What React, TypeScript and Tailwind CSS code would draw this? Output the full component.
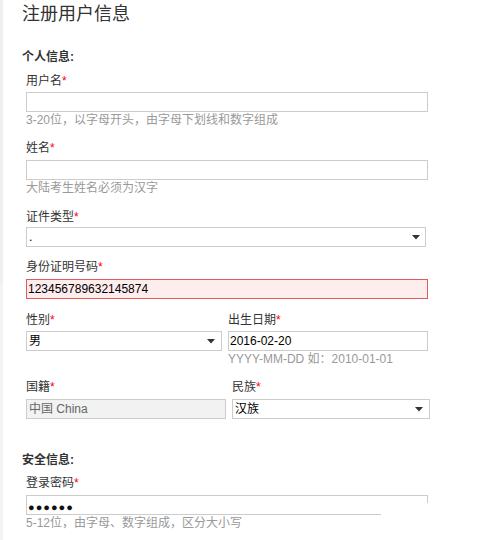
import type { ReactNode } from 'react'

function Req() {
  return <span className="text-[#ff0000]">*</span>
}

function Label({ children, className = '' }: { children: ReactNode; className?: string }) {
  return (
    <div className={`h-[16px] text-[12px] leading-[16px] text-[#333] ${className}`}>
      {children}
      <Req />
    </div>
  )
}

function Help({ children }: { children: ReactNode }) {
  return <div className="h-[16px] text-[12px] leading-[16px] text-[#999]">{children}</div>
}

function Arrow() {
  return (
    <svg width="8" height="5" viewBox="0 0 8 5" className="shrink-0">
      <polygon points="0,0 8,0 4,4.5" fill="#333" />
    </svg>
  )
}

function Select({ value, className = '', pr = 'pr-[6px]' }: { value: string; className?: string; pr?: string }) {
  return (
    <div
      className={`flex h-[20px] items-center justify-between border border-[#ccc] bg-white pl-[2px] ${pr} text-[12px] leading-[18px] text-black ${className}`}
    >
      <span>{value}</span>
      <Arrow />
    </div>
  )
}

export default function App() {
  return (
    <div className="flex h-[540px] w-[498px] overflow-hidden bg-white font-['Liberation_Sans','Noto_Sans_CJK_SC',sans-serif]">
      {/* left frame strip */}
      <div className="flex w-[3px] shrink-0 flex-col">
        <div className="h-[283px] bg-[#efefef]" />
        <div className="flex-1 bg-[#f3f3f3]" />
      </div>

      <div className="flex-1 pl-[19px]">
        <h1 className="mt-[4px] h-[20px] text-[18px] font-normal leading-[20px] text-[#333]">注册用户信息</h1>

        <div className="mt-[25px] h-[16px] text-[12px] font-bold leading-[16px] text-[#333]">个人信息:</div>

        <div className="pl-[4px]">
          {/* 用户名 */}
          <Label className="mt-[8px]">用户名</Label>
          <div className="mt-[3px] h-[20px] w-[402px] border border-[#ccc] bg-white" />
          <Help>3-20位，以字母开头，由字母下划线和数字组成</Help>

          {/* 姓名 */}
          <Label className="mt-[12px]">姓名</Label>
          <div className="mt-[4px] h-[20px] w-[402px] border border-[#ccc] bg-white" />
          <Help>大陆考生姓名必须为汉字</Help>

          {/* 证件类型 */}
          <Label className="mt-[13px]">证件类型</Label>
          <Select value="." className="mt-[2px] w-[400px]" pr="pr-[5px]" />

          {/* 身份证明号码 */}
          <Label className="mt-[12px]">身份证明号码</Label>
          <div className="mt-[4px] flex h-[20px] w-[402px] items-center border border-[#e05b5b] bg-[#fdeded] pl-[1px] text-[12px] text-black">
            123456789632145874
          </div>

          {/* 性别 / 出生日期 */}
          <div className="mt-[13px] flex">
            <div className="w-[196px]">
              <Label>性别</Label>
              <Select value="男" className="mt-[3px] w-[196px]" pr="pr-[6px]" />
            </div>
            <div className="ml-[6px] w-[200px]">
              <Label>出生日期</Label>
              <div className="mt-[3px] flex h-[20px] w-[200px] items-center border border-[#ccc] bg-white pl-[1px] text-[12px] text-black">
                2016-02-20
              </div>
              <Help>YYYY-MM-DD 如：2010-01-01</Help>
            </div>
          </div>

          {/* 国籍 / 民族 */}
          <div className="mt-[12px] flex">
            <div className="w-[200px]">
              <Label>国籍</Label>
              <div className="mt-[4px] flex h-[20px] w-[200px] items-center border border-[#ccc] bg-[#f2f2f2] pl-[2px] text-[12px] text-[#666]">
                中国 China
              </div>
            </div>
            <div className="ml-[6px] w-[198px]">
              <Label>民族</Label>
              <Select value="汉族" className="mt-[4px] w-[198px]" pr="pr-[6px]" />
            </div>
          </div>
        </div>

        <div className="mt-[33px] h-[16px] text-[12px] font-bold leading-[16px] text-[#333]">安全信息:</div>

        <div className="pl-[4px]">
          <Label className="mt-[7px]">登录密码</Label>
          <div className="mt-[4px] w-[402px]">
            <div className="flex h-[19px] border-l border-t border-[#ccc]">
              <div className="flex flex-1 items-end pb-[1px] pl-[1px] text-[11px] leading-[11px] tracking-[1px] text-[#111]">
                ●●●●●●
              </div>
              <div className="h-[7px] w-px bg-[#ccc]" />
            </div>
            <div className="h-px w-[355px] bg-[#ccc]" />
          </div>
          <Help>5-12位，由字母、数字组成，区分大小写</Help>
        </div>
      </div>
    </div>
  )
}
